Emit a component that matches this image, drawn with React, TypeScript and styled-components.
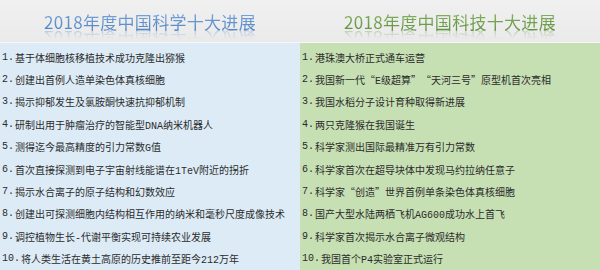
import * as React from "react";
import styled, { createGlobalStyle } from "styled-components";

const GlobalStyle = createGlobalStyle`
  html, body {
    margin: 0;
    padding: 0;
    width: 600px;
    height: 270px;
    overflow: hidden;
    background: #ededed;
  }
`;

const Board = styled.div`
  width: 600px;
  height: 270px;
  display: grid;
  grid-template-columns: 300px 300px;
  grid-template-rows: 43px 1fr;
  font-family: "Liberation Mono", "Noto Sans CJK SC", monospace;
`;

const Heading = styled.div`
  display: flex;
  align-items: center;
  justify-content: center;
  padding-top: 2px;
  background: linear-gradient(#f0f0f0, #eaeaea);
  border-bottom: 1px solid #f7f7f7;
  overflow: hidden;
`;

const Title = styled.span<{ $tone: string; $light: string }>`
  font-family: "Noto Sans CJK SC", sans-serif;
  font-size: 17px;
  line-height: 20px;
  letter-spacing: 0.3px;
  background: linear-gradient(${(p) => p.$light}, ${(p) => p.$tone});
  -webkit-background-clip: text;
  background-clip: text;
  color: transparent;
  -webkit-box-reflect: below -4px
    linear-gradient(transparent 45%, rgba(255, 255, 255, 0.45));
`;

const Panel = styled.ol<{ $bg: string }>`
  list-style: none;
  margin: 0;
  padding: 3px 0 0 2px;
  background: ${(p) => p.$bg};
  display: grid;
  grid-template-rows: repeat(10, 1fr);
`;

const Item = styled.li`
  display: flex;
  align-items: center;
  font-size: 10px;
  color: #2b2b2b;
  white-space: nowrap;
`;

const Num = styled.span`
  margin-right: 1px;
`;

const Quote = styled.span<{ $open: boolean }>`
  display: inline-block;
  width: 10px;
  font-family: "Noto Sans CJK SC", sans-serif;
  text-align: ${(p) => (p.$open ? "right" : "left")};
`;

const science = [
  "基于体细胞核移植技术成功克隆出猕猴",
  "创建出首例人造单染色体真核细胞",
  "揭示抑郁发生及氯胺酮快速抗抑郁机制",
  "研制出用于肿瘤治疗的智能型DNA纳米机器人",
  "测得迄今最高精度的引力常数G值",
  "首次直接探测到电子宇宙射线能谱在1TeV附近的拐折",
  "揭示水合离子的原子结构和幻数效应",
  "创建出可探测细胞内结构相互作用的纳米和毫秒尺度成像技术",
  "调控植物生长-代谢平衡实现可持续农业发展",
  "将人类生活在黄土高原的历史推前至距今212万年",
];

const tech = [
  "港珠澳大桥正式通车运营",
  "我国新一代“E级超算”“天河三号”原型机首次亮相",
  "我国水稻分子设计育种取得新进展",
  "两只克隆猴在我国诞生",
  "科学家测出国际最精准万有引力常数",
  "科学家首次在超导块体中发现马约拉纳任意子",
  "科学家“创造”世界首例单条染色体真核细胞",
  "国产大型水陆两栖飞机AG600成功水上首飞",
  "科学家首次揭示水合离子微观结构",
  "我国首个P4实验室正式运行",
];

// full-width quotes like the SimSun original
function withQuotes(text: string) {
  return text.split(/([“”])/).map((part, i) =>
    part === "“" || part === "”" ? (
      <Quote key={i} $open={part === "“"}>
        {part}
      </Quote>
    ) : (
      part
    )
  );
}

function List({ items, bg }: { items: string[]; bg: string }) {
  return (
    <Panel $bg={bg}>
      {items.map((t, i) => (
        <Item key={i}>
          <Num>{i + 1}.</Num>
          {withQuotes(t)}
        </Item>
      ))}
    </Panel>
  );
}

export default function App() {
  return (
    <>
      <GlobalStyle />
      <Board>
        <Heading>
          <Title $tone="#4f82c2" $light="#7aa6da">
            2018年度中国科学十大进展
          </Title>
        </Heading>
        <Heading>
          <Title $tone="#5d8f3a" $light="#86b463">
            2018年度中国科技十大进展
          </Title>
        </Heading>
        <List items={science} bg="#ddebf7" />
        <List items={tech} bg="#c6e0b4" />
      </Board>
    </>
  );
}
